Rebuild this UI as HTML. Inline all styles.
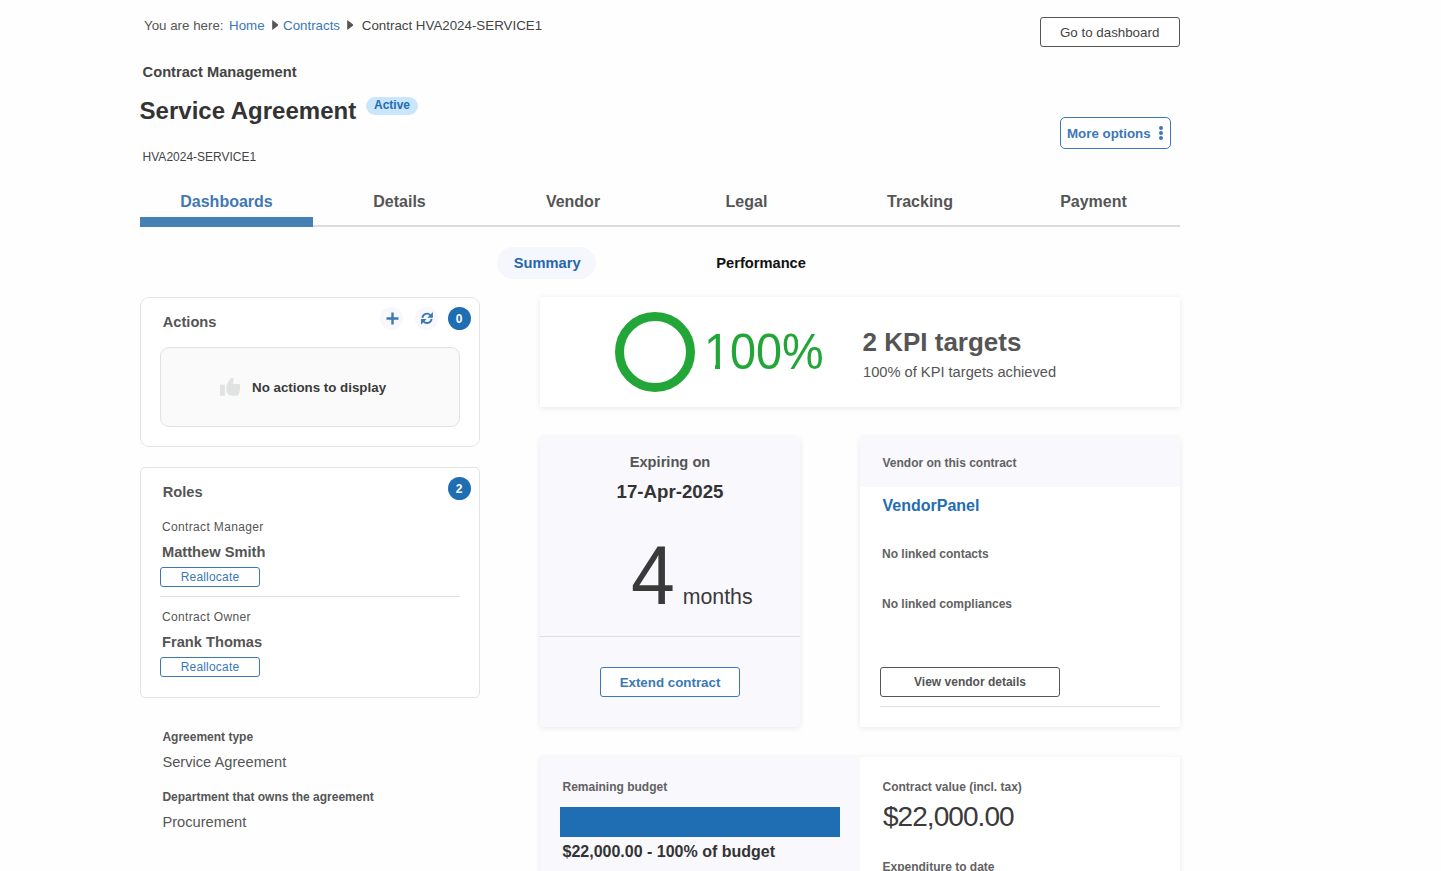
<!DOCTYPE html>
<html><head><meta charset="utf-8">
<style>
html,body{margin:0;padding:0;}
body{width:1441px;height:871px;overflow:hidden;background:#fefefe;font-family:"Liberation Sans",sans-serif;position:relative;color:#555;}
.t{position:absolute;line-height:1;white-space:nowrap;}
.b{font-weight:bold;}
.box{position:absolute;box-sizing:border-box;}
.blue{color:#3b78b5;}
</style></head><body>

<!-- breadcrumb -->
<div class="t" style="left:144px;top:18.5px;font-size:13.33px;color:#555;">You are here:</div>
<div class="t blue" style="left:229px;top:18.5px;font-size:13.33px;">Home</div>
<svg class="box" style="left:272px;top:20px;" width="8" height="10" viewBox="0 0 8 10"><path d="M0.2 0.4Q0.2 0 0.6 0.2L5.8 4.2Q6.6 5 5.8 5.8L0.6 9.8Q0.2 10 0.2 9.6Z" fill="#555"/></svg>
<div class="t blue" style="left:283px;top:18.5px;font-size:13.33px;">Contracts</div>
<svg class="box" style="left:347.3px;top:20px;" width="8" height="10" viewBox="0 0 8 10"><path d="M0.2 0.4Q0.2 0 0.6 0.2L5.8 4.2Q6.6 5 5.8 5.8L0.6 9.8Q0.2 10 0.2 9.6Z" fill="#555"/></svg>
<div class="t" style="left:361.8px;top:18.5px;font-size:13.33px;color:#444;">Contract HVA2024-SERVICE1</div>

<!-- go to dashboard -->
<div class="box" style="left:1040px;top:17px;width:140px;height:30px;border:1px solid #555;border-radius:3px;background:#fff;"></div>
<div class="t" style="left:1060px;top:26px;font-size:13.33px;color:#444;">Go to dashboard</div>

<!-- title area -->
<div class="t b" style="left:142.6px;top:64.5px;font-size:14.67px;color:#444;">Contract Management</div>
<div class="t b" style="left:139.6px;top:98.8px;font-size:24px;color:#333;">Service Agreement</div>
<div class="box" style="left:366px;top:97px;width:52px;height:18px;border-radius:9px;background:#cae6fb;"></div>
<div class="t b" style="left:374px;top:99px;font-size:12px;color:#1f6bb4;">Active</div>
<div class="t" style="left:142.6px;top:150.5px;font-size:12px;color:#444;">HVA2024-SERVICE1</div>

<!-- more options -->
<div class="box" style="left:1060px;top:117px;width:111px;height:32px;border:1px solid #3b78b5;border-radius:5px;background:#fff;"></div>
<div class="t b blue" style="left:1067px;top:126.5px;font-size:13.33px;">More options</div>
<div class="box" style="left:1159px;top:126px;width:4px;height:4px;border-radius:2px;background:#3b78b5;"></div>
<div class="box" style="left:1159px;top:131px;width:4px;height:4px;border-radius:2px;background:#3b78b5;"></div>
<div class="box" style="left:1159px;top:136px;width:4px;height:4px;border-radius:2px;background:#3b78b5;"></div>

<!-- tabs -->
<div class="box" style="left:140px;top:225px;width:1040px;height:2px;background:#dcdcdc;"></div>
<div class="box" style="left:140px;top:217px;width:173px;height:10px;background:#4580b4;"></div>
<div class="t b" style="left:140px;width:173px;text-align:center;top:194px;font-size:16px;color:#4178b2;">Dashboards</div>
<div class="t b" style="left:313px;width:173px;text-align:center;top:194px;font-size:16px;color:#555;">Details</div>
<div class="t b" style="left:486px;width:174px;text-align:center;top:194px;font-size:16px;color:#555;">Vendor</div>
<div class="t b" style="left:660px;width:173px;text-align:center;top:194px;font-size:16px;color:#555;">Legal</div>
<div class="t b" style="left:833px;width:174px;text-align:center;top:194px;font-size:16px;color:#555;">Tracking</div>
<div class="t b" style="left:1007px;width:173px;text-align:center;top:194px;font-size:16px;color:#555;">Payment</div>

<!-- subtabs -->
<div class="box" style="left:497px;top:247px;width:99px;height:32px;border-radius:16px;background:#f6f6fd;"></div>
<div class="t b" style="left:497.7px;width:99px;text-align:center;top:256px;font-size:14.67px;color:#2468ab;">Summary</div>
<div class="t b" style="left:716.3px;top:256px;font-size:14.67px;color:#111;">Performance</div>


<!-- actions card -->
<div class="box" style="left:140px;top:297px;width:340px;height:150px;border:1px solid #e1e4e6;border-radius:9px;background:#fff;"></div>
<div class="t b" style="left:162.7px;top:315px;font-size:14.67px;color:#555;">Actions</div>
<div class="box" style="left:380px;top:307px;width:23px;height:23px;border-radius:50%;background:#f7f7fd;"></div>
<svg class="box" style="left:383.5px;top:310px;" width="17" height="17" viewBox="0 0 17 17"><path d="M8.5 2.5v12M2.5 8.5h12" stroke="#3b78b5" stroke-width="2.4" fill="none"/></svg>
<div class="box" style="left:415px;top:307px;width:23px;height:23px;border-radius:50%;background:#f7f7fd;"></div>
<svg class="box" style="left:412px;top:305px;" width="30" height="28" viewBox="0 0 30 28"><path d="M10.4 12.9A4.6 4.6 0 0 1 18.5 10.3M19.6 13.9A4.6 4.6 0 0 1 11.5 16.3" stroke="#3b78b5" stroke-width="1.8" fill="none"/><path d="M20.9 6.9L20.9 12.7L15.3 12.7Z M9 14.1L9 19.7L14.6 14.1Z" fill="#3b78b5"/></svg>
<div class="box" style="left:447.5px;top:306.5px;width:23px;height:23px;border-radius:50%;background:#1f6db2;"></div>
<div class="t b" style="left:447.5px;width:23px;text-align:center;top:312.5px;font-size:12px;color:#fff;">0</div>
<div class="box" style="left:160px;top:347px;width:300px;height:80px;border:1px solid #e0e2e4;border-radius:9px;background:#fafafa;"></div>
<svg class="box" style="left:210px;top:370px;" width="40" height="35" viewBox="0 0 40 35"><rect x="10" y="14.5" width="4.9" height="11.2" rx="0.6" fill="#e1e3e3"/><path d="M17.5 13.2L20.4 8.6C21.2 7.5 23.5 7.6 23.8 9.3L22.8 13.9L29 13.9C30.2 13.9 30.6 15.5 29.8 16.6C30.3 17.3 30.3 18.3 29.7 19.2C30.1 19.9 30 21 29.2 21.8C29.3 23.6 28.6 25.7 26.5 25.7L22.5 25.7C18.5 25.7 16.2 23 16.2 19.5C16.2 16.5 16.6 14.6 17.5 13.2Z" fill="#e1e3e3"/></svg>
<div class="t b" style="left:252px;top:381px;font-size:13.33px;color:#3a3a3a;">No actions to display</div>

<!-- roles card -->
<div class="box" style="left:140px;top:467px;width:340px;height:231px;border:1px solid #e1e4e6;border-radius:5px;background:#fff;"></div>
<div class="t b" style="left:162.7px;top:484.7px;font-size:14.67px;color:#555;">Roles</div>
<div class="box" style="left:447.5px;top:476.5px;width:23px;height:23px;border-radius:50%;background:#1f6db2;"></div>
<div class="t b" style="left:447.5px;width:23px;text-align:center;top:482.5px;font-size:12px;color:#fff;">2</div>

<div class="t" style="left:162px;top:520.8px;font-size:12px;color:#555;letter-spacing:0.35px;">Contract Manager</div>
<div class="t b" style="left:162px;top:544.6px;font-size:14.67px;color:#555;">Matthew Smith</div>
<div class="box" style="left:160px;top:567px;width:100px;height:20px;border:1px solid #3b78b5;border-radius:3px;background:#fff;"></div>
<div class="t blue" style="left:160px;width:100px;text-align:center;top:570.8px;font-size:12px;letter-spacing:0.2px;">Reallocate</div>
<div class="box" style="left:160px;top:596px;width:300px;height:1px;background:#e0e0e0;"></div>
<div class="t" style="left:162px;top:610.8px;font-size:12px;color:#555;letter-spacing:0.35px;">Contract Owner</div>
<div class="t b" style="left:162px;top:634.6px;font-size:14.67px;color:#555;">Frank Thomas</div>
<div class="box" style="left:160px;top:657px;width:100px;height:20px;border:1px solid #3b78b5;border-radius:3px;background:#fff;"></div>
<div class="t blue" style="left:160px;width:100px;text-align:center;top:660.8px;font-size:12px;letter-spacing:0.2px;">Reallocate</div>

<!-- agreement info -->
<div class="t b" style="left:162.4px;top:730.8px;font-size:12px;color:#555;">Agreement type</div>
<div class="t" style="left:162.4px;top:754.8px;font-size:14.67px;color:#555;">Service Agreement</div>
<div class="t b" style="left:162.4px;top:790.8px;font-size:12px;color:#555;">Department that owns the agreement</div>
<div class="t" style="left:162.4px;top:815.2px;font-size:14.67px;color:#555;">Procurement</div>

<!-- KPI card -->
<div class="box" style="left:540px;top:297px;width:640px;height:110px;background:#fff;box-shadow:0 1px 6px rgba(0,0,0,0.09);"></div>
<svg class="box" style="left:614px;top:311px;" width="82" height="82" viewBox="0 0 82 82"><circle cx="41" cy="41" r="35.5" stroke="#23a638" stroke-width="9" fill="none"/></svg>
<div class="t" style="left:704.1px;top:327px;font-size:50px;color:#23a638;transform:scaleX(0.936);transform-origin:0 0;">100%</div>
<div class="box" style="left:705px;top:365px;width:10px;height:5px;background:#fff;"></div><div class="box" style="left:720px;top:365px;width:10px;height:5px;background:#fff;"></div>
<div class="t b" style="left:862.5px;top:328.8px;font-size:26px;color:#555;">2 KPI targets</div>
<div class="t" style="left:863px;top:365px;font-size:14.67px;color:#555;">100% of KPI targets achieved</div>

<!-- expiring card -->
<div class="box" style="left:540px;top:437px;width:260px;height:290px;background:#f8f8fd;border-radius:4px;box-shadow:0 1px 6px rgba(0,0,0,0.09);"></div>
<div class="t b" style="left:540px;width:260px;text-align:center;top:455.4px;font-size:14.67px;color:#555;">Expiring on</div>
<div class="t b" style="left:540px;width:260px;text-align:center;top:482.5px;font-size:18.67px;color:#333;">17-Apr-2025</div>
<div class="t" style="left:631px;top:533.8px;font-size:83px;color:#3a3a3a;transform:scaleX(0.95);transform-origin:0 0;">4</div>
<div class="t" style="left:682.7px;top:587px;font-size:21.33px;color:#3a3a3a;">months</div>
<div class="box" style="left:540px;top:636px;width:260px;height:1px;background:#dedee6;"></div>
<div class="box" style="left:600px;top:667px;width:140px;height:30px;border:1px solid #3b78b5;border-radius:3px;background:#fff;"></div>
<div class="t b blue" style="left:600px;width:140px;text-align:center;top:675.5px;font-size:13.33px;">Extend contract</div>

<!-- vendor card -->
<div class="box" style="left:860px;top:437px;width:320px;height:290px;background:#fff;border-radius:4px 4px 0 0;box-shadow:0 1px 6px rgba(0,0,0,0.09);overflow:hidden;"><div style="height:50px;background:#f8f8fd;"></div></div>
<div class="t b" style="left:882.5px;top:456.5px;font-size:12px;color:#626262;">Vendor on this contract</div>
<div class="t b" style="left:882.5px;top:498.2px;font-size:16px;color:#1f6db2;">VendorPanel</div>
<div class="t b" style="left:882px;top:547.8px;font-size:12px;color:#626262;">No linked contacts</div>
<div class="t b" style="left:882px;top:597.8px;font-size:12px;color:#626262;">No linked compliances</div>
<div class="box" style="left:880px;top:667px;width:180px;height:30px;border:1px solid #555;border-radius:3px;background:#fff;"></div>
<div class="t b" style="left:880px;width:180px;text-align:center;top:675.5px;font-size:12px;color:#555;">View vendor details</div>
<div class="box" style="left:880px;top:706px;width:280px;height:1px;background:#e0e0e0;"></div>

<!-- budget card -->
<div class="box" style="left:540px;top:757px;width:640px;height:200px;background:#fff;box-shadow:0 1px 6px rgba(0,0,0,0.09);"><div style="width:320px;height:100%;background:#f8f8fd;"></div></div>
<div class="t b" style="left:562.5px;top:781px;font-size:12px;color:#626262;">Remaining budget</div>
<div class="box" style="left:560px;top:807px;width:280px;height:30px;background:#1f6db2;"></div>
<div class="t b" style="left:562.5px;top:843.8px;font-size:16px;color:#333;">$22,000.00 - 100% of budget</div>
<div class="t b" style="left:882.5px;top:781px;font-size:12px;color:#626262;">Contract value (incl. tax)</div>
<div class="t" style="left:883px;top:802.8px;font-size:28px;color:#3a3a3a;letter-spacing:-0.95px;">$22,000.00</div>
<div class="t b" style="left:882.5px;top:861px;font-size:12px;color:#626262;">Expenditure to date</div>
</body></html>
